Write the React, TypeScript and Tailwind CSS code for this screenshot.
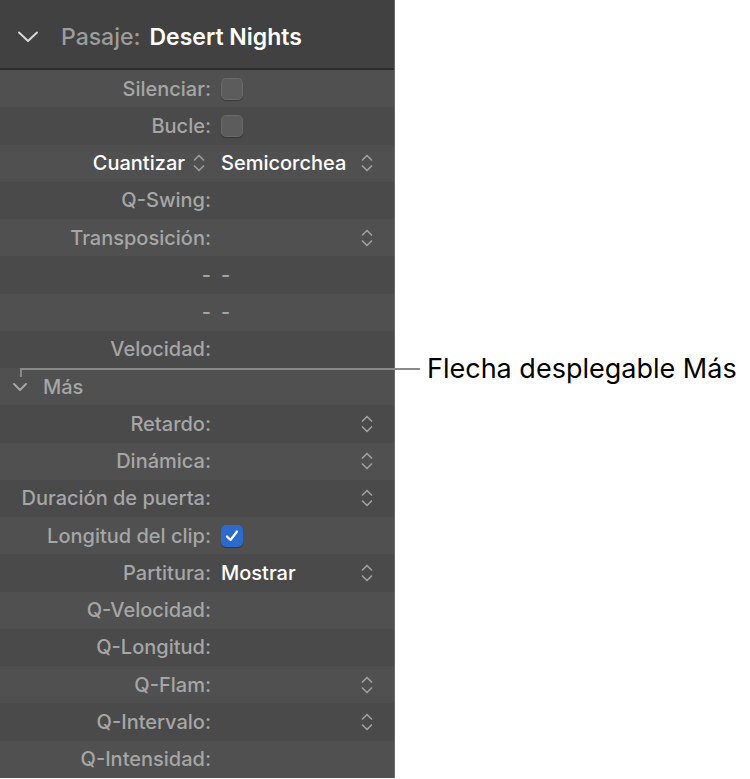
import type { ReactNode } from "react";

type Row = {
  label: string;
  value?: ReactNode;
  stepper?: boolean;
  bright?: boolean;
};

function Stepper({ className = "" }: { className?: string }) {
  return (
    <svg width="14" height="22" viewBox="0 0 14 22" className={className} fill="none">
      <path d="M2.5 8 L7 3.5 L11.5 8" stroke="currentColor" strokeWidth="1.7" strokeLinecap="round" strokeLinejoin="round" />
      <path d="M2.5 14 L7 18.5 L11.5 14" stroke="currentColor" strokeWidth="1.7" strokeLinecap="round" strokeLinejoin="round" />
    </svg>
  );
}

function Checkbox({ checked = false }: { checked?: boolean }) {
  if (checked) {
    return (
      <span className="flex h-[22px] w-[22px] items-center justify-center rounded-[5px] bg-[#2c6bcb] shadow-[0_1px_1px_rgba(0,0,0,0.35)]">
        <svg width="16" height="16" viewBox="0 0 16 16" fill="none">
          <path d="M3 8.5 L6.5 12 L13 3.5" stroke="white" strokeWidth="2.2" strokeLinecap="round" strokeLinejoin="round" />
        </svg>
      </span>
    );
  }
  return (
    <span className="block h-[22px] w-[22px] rounded-[5px] border border-[#6a6a6a] bg-[#5c5c5c] shadow-[0_1px_1px_rgba(0,0,0,0.3)]" />
  );
}

const top: Row[] = [
  { label: "Silenciar:", value: <Checkbox /> },
  { label: "Bucle:", value: <Checkbox /> },
  { label: "Cuantizar", value: <span className="text-white">Semicorchea</span>, stepper: true, bright: true },
  { label: "Q-Swing:" },
  { label: "Transposición:", stepper: true },
  { label: "-", value: <span>-</span> },
  { label: "-", value: <span>-</span> },
  { label: "Velocidad:" },
];

const more: Row[] = [
  { label: "Retardo:", stepper: true },
  { label: "Dinámica:", stepper: true },
  { label: "Duración de puerta:", stepper: true },
  { label: "Longitud del clip:", value: <Checkbox checked /> },
  { label: "Partitura:", value: <span className="text-white">Mostrar</span>, stepper: true },
  { label: "Q-Velocidad:" },
  { label: "Q-Longitud:" },
  { label: "Q-Flam:", stepper: true },
  { label: "Q-Intervalo:", stepper: true },
  { label: "Q-Intensidad:" },
];

function ParamRow({ row, shade }: { row: Row; shade: boolean }) {
  return (
    <div className={`flex h-[37.25px] items-center ${shade ? "bg-[#505050]" : "bg-[#4a4a4a]"}`}>
      <div className="flex w-[211px] shrink-0 items-center justify-end">
        {row.bright ? (
          <>
            <span className="text-white">{row.label}</span>
            <Stepper className="ml-[7px] mr-[5px] text-[#9a9a9a]" />
          </>
        ) : (
          <span>{row.label}</span>
        )}
      </div>
      <div className="flex flex-1 items-center pl-[10px] pr-[20px]">
        <div className="flex-1">{row.value}</div>
        {row.stepper && <Stepper className="text-[#9e9e9e]" />}
      </div>
    </div>
  );
}

export default function App() {
  return (
    <div
      className="relative flex h-[779px] w-[750px] bg-white"
      style={{ fontFamily: "Inter, 'Noto Sans', sans-serif" }}
    >
      <div className="flex h-[778px] w-[395px] flex-col border-r border-[#6c6c6c] text-[20px] font-medium leading-none text-[#a6a6a6]">
        <div className="flex h-[68px] shrink-0 items-center bg-[#414141] pl-[17px] pt-[6px] text-[23px]">
          <svg width="22" height="14" viewBox="0 0 22 14" fill="none">
            <path d="M2 2.5 L11 11 L20 2.5" stroke="#d8d8d8" strokeWidth="2" strokeLinecap="round" strokeLinejoin="round" />
          </svg>
          <span className="ml-[22px] text-[#9c9c9c]">Pasaje:</span>
          <span className="ml-[9px] font-semibold text-white">Desert Nights</span>
        </div>
        <div className="h-[2px] shrink-0 bg-[#2c2c2c]" />

        {top.map((r, i) => (
          <ParamRow key={`t${i}`} row={r} shade={i % 2 === 0} />
        ))}

        {/* disclosure for the extra parameters */}
        <div className="flex h-[37.25px] items-center bg-[#505050] pl-[12px]">
          <svg width="16" height="12" viewBox="0 0 16 12" fill="none">
            <path d="M2 3 L8 9 L14 3" stroke="#a6a6a6" strokeWidth="2" strokeLinecap="round" strokeLinejoin="round" />
          </svg>
          <span className="ml-[15px]">Más</span>
        </div>

        {more.map((r, i) => (
          <ParamRow key={`m${i}`} row={r} shade={i % 2 === 1} />
        ))}
      </div>

      {/* callout */}
      <div className="pointer-events-none absolute left-[20px] top-[368px] h-[9px] w-[2px] bg-[#8a8a8a]" />
      <div className="pointer-events-none absolute left-[20px] top-[368px] h-[2px] w-[400px] bg-[#8a8a8a]" />
      <div
        className="absolute left-[427px] top-[351px] text-[27px] leading-[36px] text-black"
        style={{ fontFamily: "Inter, 'Noto Sans', sans-serif" }}
      >
        Flecha desplegable Más
      </div>
    </div>
  );
}
